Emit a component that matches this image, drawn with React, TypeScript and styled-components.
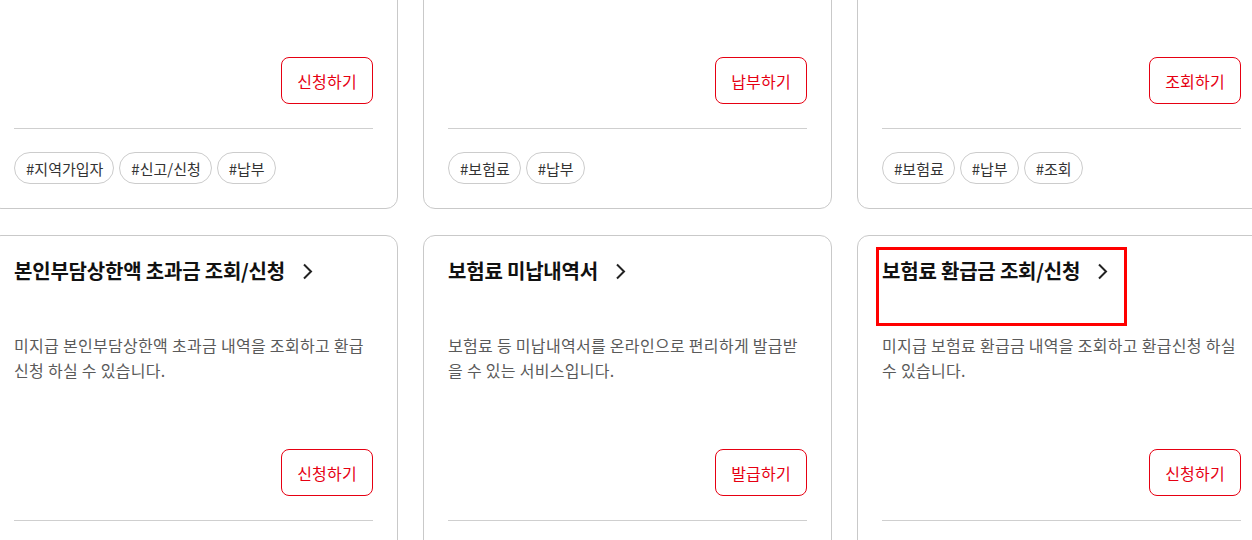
import React from "react";
import styled, { createGlobalStyle } from "styled-components";

const Global = createGlobalStyle`
  html, body { margin: 0; padding: 0; background: #fff; overflow: hidden; }
  body { font-family: "Noto Sans CJK KR", "Noto Sans", sans-serif; }
  * { box-sizing: border-box; }
`;

const Page = styled.div`
  width: 1252px;
  height: 540px;
  overflow: hidden;
`;

const Grid = styled.div`
  display: grid;
  grid-template-columns: repeat(3, 409px);
  column-gap: 25px;
  row-gap: 26px;
  margin: -157px 0 0 -11px;
`;

const Card = styled.article`
  height: 366px;
  border: 1px solid #c9c9c9;
  border-radius: 12px;
  background: #fff;
  padding: 17px 24px 24px;
  display: flex;
  flex-direction: column;
`;

const TitleLink = styled.a<{ $marked?: boolean }>`
  align-self: flex-start;
  display: flex;
  align-items: flex-start;
  gap: 17px;
  height: 67px;
  padding-right: 13px;
  color: #111;
  text-decoration: none;
  font-size: 20px;
  font-weight: 700;
  line-height: 36px;
  letter-spacing: -0.2px;
  outline: ${(p) => (p.$marked ? "3px solid #ff0000" : "none")};
  outline-offset: 3px;
  svg { margin-top: 10px; flex: none; }
`;

const Desc = styled.p`
  margin: 13px 0 0;
  height: 50px;
  font-size: 16px;
  line-height: 25px;
  letter-spacing: 0.3px;
  color: #5a5a5a;
`;

const Actions = styled.div`
  margin-top: auto;
  display: flex;
  justify-content: flex-end;
`;

const ActionButton = styled.button`
  width: 92px;
  height: 47px;
  border: 1px solid #e60012;
  border-radius: 8px;
  background: #fff;
  color: #e60012;
  font-family: inherit;
  font-size: 16px;
  letter-spacing: 0.2px;
  cursor: pointer;
`;

const Divider = styled.hr`
  margin: 24px 0 23px;
  height: 1px;
  border: 0;
  background: #cfcfcf;
  flex: none;
`;

const Tags = styled.ul`
  list-style: none;
  margin: 0;
  padding: 0;
  display: flex;
  gap: 5px;
`;

const Tag = styled.li`
  height: 32px;
  padding: 0 10px 0 11px;
  border: 1px solid #cccccc;
  border-radius: 16px;
  display: flex;
  align-items: center;
  font-size: 15px;
  color: #333;
`;

const Chevron = () => (
  <svg width="11" height="17" viewBox="0 0 11 17" fill="none">
    <path d="M2 1.5 L9 8.5 L2 15.5" stroke="#222" strokeWidth="2" />
  </svg>
);

type Item = {
  title: string;
  desc: string;
  action: string;
  tags: string[];
  marked?: boolean;
};

const items: Item[] = [
  { title: "지역가입자 신고/신청", desc: "", action: "신청하기", tags: ["#지역가입자", "#신고/신청", "#납부"] },
  { title: "보험료 납부", desc: "", action: "납부하기", tags: ["#보험료", "#납부"] },
  { title: "보험료 조회", desc: "", action: "조회하기", tags: ["#보험료", "#납부", "#조회"] },
  {
    title: "본인부담상한액 초과금 조회/신청",
    desc: "미지급 본인부담상한액 초과금 내역을 조회하고 환급 신청 하실 수 있습니다.",
    action: "신청하기",
    tags: ["#본인부담상한액", "#환급"],
  },
  {
    title: "보험료 미납내역서",
    desc: "보험료 등 미납내역서를 온라인으로 편리하게 발급받을 수 있는 서비스입니다.",
    action: "발급하기",
    tags: ["#보험료", "#미납"],
  },
  {
    title: "보험료 환급금 조회/신청",
    desc: "미지급 보험료 환급금 내역을 조회하고 환급신청 하실 수 있습니다.",
    action: "신청하기",
    tags: ["#보험료", "#환급"],
    marked: true,
  },
];

export default function App() {
  return (
    <Page>
      <Global />
      <Grid>
        {items.map((it, i) => (
          <Card key={i}>
            <TitleLink href="#" $marked={it.marked}>
              <span>{it.title}</span>
              <Chevron />
            </TitleLink>
            <Desc>{it.desc}</Desc>
            <Actions>
              <ActionButton>{it.action}</ActionButton>
            </Actions>
            <Divider />
            <Tags>
              {it.tags.map((t) => (
                <Tag key={t}>{t}</Tag>
              ))}
            </Tags>
          </Card>
        ))}
      </Grid>
    </Page>
  );
}
